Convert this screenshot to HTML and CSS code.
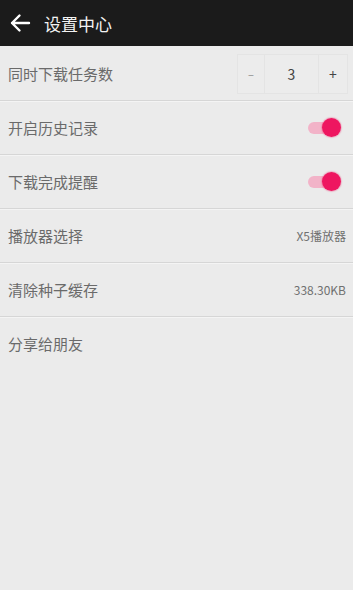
FILE: index.html
```html
<!DOCTYPE html>
<html lang="zh">
<head>
<meta charset="utf-8">
<link rel="stylesheet" href="styles.css">
</head>
<body>
<div class="app">
  <header class="bar">
    <svg class="back" width="22" height="22" viewBox="0 0 22 22">
      <path d="M20 11H3M10.5 3.5L3 11l7.5 7.5" fill="none" stroke="#fff" stroke-width="2.4" stroke-linecap="round" stroke-linejoin="round"/>
    </svg>
    <span class="title">设置中心</span>
  </header>
  <div class="row">
    <span class="label">同时下载任务数</span>
    <div class="stepper">
      <span class="cell minus">–</span>
      <span class="cell num">3</span>
      <span class="cell plus">+</span>
    </div>
  </div>
  <div class="row">
    <span class="label">开启历史记录</span>
    <span class="toggle"><span class="knob"></span></span>
  </div>
  <div class="row">
    <span class="label">下载完成提醒</span>
    <span class="toggle"><span class="knob"></span></span>
  </div>
  <div class="row">
    <span class="label">播放器选择</span>
    <span class="value">X5播放器</span>
  </div>
  <div class="row">
    <span class="label">清除种子缓存</span>
    <span class="value">338.30KB</span>
  </div>
  <div class="row last">
    <span class="label">分享给朋友</span>
  </div>
</div>
</body>
</html>
```
FILE: styles.css
```css
html, body {
  margin: 0;
  padding: 0;
  background: #ebebeb;
}
body {
  font-family: "Noto Sans CJK SC", "Noto Sans", sans-serif;
  width: 353px;
  height: 590px;
  overflow: hidden;
}
.bar {
  height: 46px;
  background: #1b1b1b;
  display: flex;
  align-items: center;
  padding-left: 9px;
  box-sizing: border-box;
}
.back {
  display: block;
}
.title {
  color: #f2f2f2;
  font-size: 17px;
  margin-left: 13px;
  line-height: 1;
}
.row {
  height: 53px;
  border-bottom: 1px solid #d6d6d6;
  box-shadow: 0 1px 0 #f4f4f4;
  display: flex;
  align-items: center;
  justify-content: space-between;
  padding: 0 9px 0 8px;
  box-sizing: content-box;
}
.row:first-of-type {
  margin-top: 1px;
}
.row.last {
  border-bottom: none;
  box-shadow: none;
}
.label {
  color: #6a6a6a;
  font-size: 15px;
  line-height: 1;
  padding-bottom: 1px;
}
.value {
  color: #707070;
  font-size: 12px;
  line-height: 1;
  margin-right: -2px;
}
.stepper {
  display: flex;
  height: 40px;
  margin-right: -4px;
}
.cell {
  display: flex;
  align-items: center;
  justify-content: center;
  color: #555;
  font-size: 13px;
  border: 1px solid #e4e4e4;
  background: #ececec;
  box-sizing: border-box;
}
.cell + .cell {
  border-left: none;
}
.minus {
  width: 28px;
  color: #888;
  font-size: 11px;
}
.num {
  width: 54px;
  font-size: 14px;
  color: #444;
}
.plus {
  width: 29px;
  font-size: 14px;
  color: #444;
}
.toggle {
  position: relative;
  width: 26px;
  height: 12px;
  border-radius: 6px;
  background: #f2b3c8;
  margin-right: 10px;
}
.knob {
  position: absolute;
  right: -7px;
  top: -4px;
  width: 19px;
  height: 19px;
  border-radius: 50%;
  background: #ee1660;
  box-shadow: 0 0 1px 1px rgba(238, 22, 96, 0.25);
}
```
